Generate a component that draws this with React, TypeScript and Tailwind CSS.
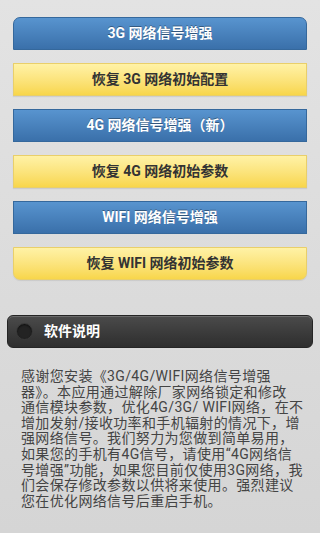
import React from "react";

const font = { fontFamily: 'Roboto, "Noto Sans CJK SC", sans-serif' };

const buttons = [
  { label: "3G 网络信号增强", kind: "blue", extra: "rounded-t-[7px]" },
  { label: "恢复 3G 网络初始配置", kind: "yellow", extra: "" },
  { label: "4G 网络信号增强（新）", kind: "blue", extra: "" },
  { label: "恢复 4G 网络初始参数", kind: "yellow", extra: "" },
  { label: "WIFI 网络信号增强", kind: "blue", extra: "" },
  { label: "恢复 WIFI 网络初始参数", kind: "yellow", extra: "rounded-b-[7px]" },
];

const lines = [
  "感谢您安装《3G/4G/WIFI网络信号增强",
  "器》。本应用通过解除厂家网络锁定和修改",
  "通信模块参数，优化4G/3G/ WIFI网络，在不",
  "增加发射/接收功率和手机辐射的情况下，增",
  "强网络信号。我们努力为您做到简单易用，",
  "如果您的手机有4G信号，请使用“4G网络信",
  "号增强”功能，如果您目前仅使用3G网络，我",
  "们会保存修改参数以供将来使用。强烈建议",
  "您在优化网络信号后重启手机。",
];

export default function App() {
  return (
    <div
      className="w-[320px] h-[533px] overflow-hidden bg-gradient-to-b from-[#e3e3e3] to-[#d5d5d5] pt-[17px]"
      style={font}
    >
      {/* Action buttons */}
      <div className="flex flex-col gap-[13px] mx-[13px]">
        {buttons.map((b, i) => (
          <div
            key={i}
            className={
              b.kind === "blue"
                ? `h-[33px] flex items-center justify-center bg-gradient-to-b from-[#5894cf] to-[#3a70aa] border border-[#35689c] text-white text-[14px] font-bold [text-shadow:0_-1px_0_rgba(0,0,0,0.35)] ${b.extra}`
                : `h-[33px] flex items-center justify-center bg-gradient-to-b from-[#fff2a6] to-[#f8d64a] border border-[#e9cf6a] text-[#333] text-[14px] font-bold shadow-[0_1px_1px_rgba(0,0,0,0.08)] ${b.extra}`
            }
          >
            {b.label}
          </div>
        ))}
      </div>

      {/* Section header */}
      <div className="mx-[7px] mt-[35px] h-[33px] flex items-center rounded-[6px] bg-gradient-to-b from-[#4b4b4b] to-[#2e2e2e] border border-[#252525] shadow-[inset_0_1px_0_rgba(255,255,255,0.18)]">
        <div className="ml-[8px] w-[17px] h-[17px] rounded-full bg-[#232323] border border-[#3a3a3a] shadow-[inset_0_1px_2px_rgba(0,0,0,0.6)]" />
        <span className="ml-[11px] text-white text-[14px] font-bold">软件说明</span>
      </div>

      {/* Description */}
      <div className="mt-[21px] pl-[21px] text-[14px] leading-[15.6px] tracking-[0.35px] text-[#444]">
        {lines.map((l, i) => (
          <div key={i} className="whitespace-nowrap">
            {l}
          </div>
        ))}
      </div>
    </div>
  );
}
